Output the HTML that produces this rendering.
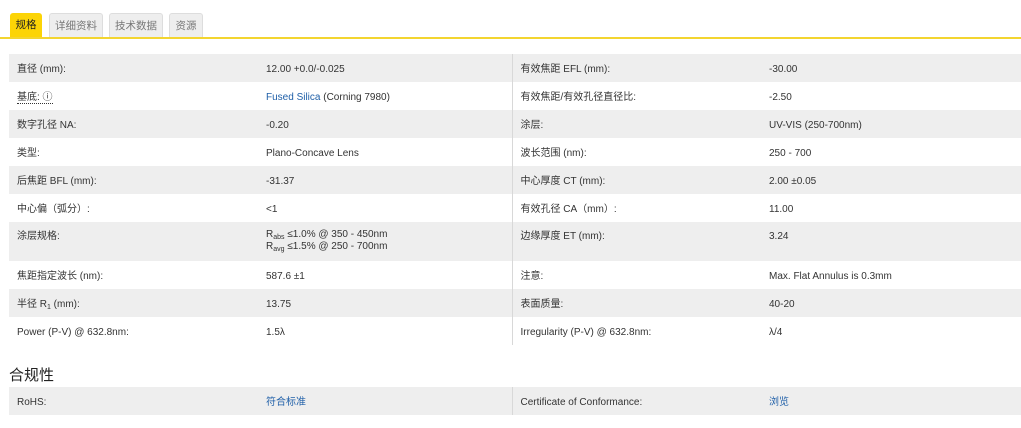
<!DOCTYPE html><html><head><meta charset="utf-8"><style>
body{margin:0;background:#fff;font-family:"Liberation Sans","Noto Sans CJK SC",sans-serif;font-size:10px;color:#333;width:1021px;height:428px;overflow:hidden;position:relative}
.tab{position:absolute;top:13px;height:24px;line-height:25px;text-align:center;border-radius:3px 3px 0 0;font-size:10.5px}
.t0{left:10px;width:32px;background:#fcd406;color:#222}
.tg{background:#eee;border:1px solid #ddd;border-bottom:none;color:#777;height:23px}
.line{position:absolute;left:0;top:37px;width:1021px;height:2px;background:#f3d530}
table{position:absolute;left:9px;width:1012px;border-collapse:collapse;table-layout:fixed}
td{padding:3px 0 0 8px;height:28px;line-height:14px;vertical-align:middle;color:#333;box-sizing:border-box;white-space:nowrap}
td *{line-height:0}
tr:nth-child(odd) td{background:#eeeeee}
td.c1{width:249px}td.c2{width:254px;border-right:1px solid #d8d8d8}td.c3{width:249px}
a{color:#1f5fa8;text-decoration:none}
sub{font-size:7px;vertical-align:-2px;line-height:0}
h3{position:absolute;left:9px;top:364px;margin:0;font-size:15px;font-weight:normal;color:#222}
</style></head><body>
<div class="tab t0">规格</div>
<div class="tab tg" style="left:49px;width:52px">详细资料</div>
<div class="tab tg" style="left:109px;width:52px">技术数据</div>
<div class="tab tg" style="left:169px;width:32px">资源</div>
<div class="line"></div>
<table style="top:54px">
<tr><td class="c1">直径 (mm):</td><td class="c2">12.00 +0.0/-0.025</td><td class="c3">有效焦距 EFL (mm):</td><td>-30.00</td></tr>
<tr><td class="c1"><span style="border-bottom:1px dotted #333;line-height:14px">基底: ⓘ</span></td><td class="c2"><a style="line-height:14px">Fused Silica</a> (Corning 7980)</td><td class="c3">有效焦距/有效孔径直径比:</td><td>-2.50</td></tr>
<tr><td class="c1">数字孔径 NA:</td><td class="c2">-0.20</td><td class="c3">涂层:</td><td>UV-VIS (250-700nm)</td></tr>
<tr><td class="c1">类型:</td><td class="c2">Plano-Concave Lens</td><td class="c3">波长范围 (nm):</td><td>250 - 700</td></tr>
<tr><td class="c1">后焦距 BFL (mm):</td><td class="c2">-31.37</td><td class="c3">中心厚度 CT (mm):</td><td>2.00 ±0.05</td></tr>
<tr><td class="c1">中心偏（弧分）:</td><td class="c2">&lt;1</td><td class="c3">有效孔径 CA（mm）:</td><td>11.00</td></tr>
<tr><td class="c1" style="height:39px;vertical-align:top;padding-top:8px">涂层规格:</td><td class="c2" style="vertical-align:top;padding-top:7px;line-height:12px">R<sub>abs</sub> ≤1.0% @ 350 - 450nm<br>R<sub>avg</sub> ≤1.5% @ 250 - 700nm</td><td class="c3" style="vertical-align:top;padding-top:8px">边缘厚度 ET (mm):</td><td style="vertical-align:top;padding-top:8px">3.24</td></tr>
<tr><td class="c1">焦距指定波长 (nm):</td><td class="c2">587.6 ±1</td><td class="c3">注意:</td><td>Max. Flat Annulus is 0.3mm</td></tr>
<tr><td class="c1">半径 R<sub>1</sub> (mm):</td><td class="c2">13.75</td><td class="c3">表面质量:</td><td>40-20</td></tr>
<tr><td class="c1">Power (P-V) @ 632.8nm:</td><td class="c2">1.5λ</td><td class="c3">Irregularity (P-V) @ 632.8nm:</td><td>λ/4</td></tr>
</table>
<h3>合规性</h3>
<table style="top:387px">
<tr><td class="c1">RoHS:</td><td class="c2"><a style="line-height:14px">符合标准</a></td><td class="c3">Certificate of Conformance:</td><td><a style="line-height:14px">浏览</a></td></tr>
</table>
</body></html>
